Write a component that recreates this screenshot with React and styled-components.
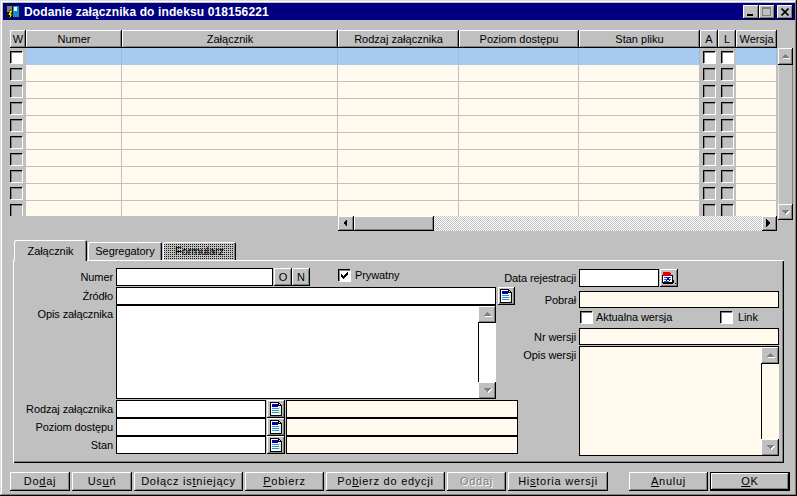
import React from 'react';
import styled, { createGlobalStyle, css } from 'styled-components';

const Global = createGlobalStyle`
  html, body { margin: 0; padding: 0; background: #c0c0c0; }
  body { font-family: "Liberation Sans", Arial, sans-serif; font-size: 11px; color: #000; }
`;

const raised = css`
  background: #c0c0c0;
  box-shadow: inset -1px -1px #000, inset 1px 1px #fff, inset -2px -2px #808080;
`;

const Window = styled.div`
  width: 797px; height: 496px; box-sizing: border-box; padding: 3px 2px 0 3px;
  background: #c0c0c0; overflow: hidden;
  box-shadow: inset -1px -1px #000, inset 1px 1px #dfdfdf, inset -2px -2px #808080, inset 2px 2px #fff;
  display: flex; flex-direction: column;
`;
const TitleBar = styled.div`
  height: 17px; flex: none; background: #000080; color: #fff; display: flex; align-items: center;
  padding: 0 2px;
`;
const TitleText = styled.div`
  font-weight: bold; font-size: 12px; letter-spacing: 0.12px; margin-left: 3px; flex: 1; white-space: nowrap;
`;
const WinBtn = styled.div`
  ${raised}; width: 16px; height: 14px; display: flex; align-items: center; justify-content: center;
  margin-left: ${p => p.$gap || 0}px;
`;
const Pane = styled.div`
  display: flex; margin: 10px 0 0 7px; align-items: flex-start; gap: 1px;
`;
const TableWrap = styled.div` width: 767px; flex: none; `;
const HeaderRow = styled.div` display: flex; height: 18px; `;
const HeadCell = styled.div`
  ${raised}; width: ${p => p.$w}px; flex: none; display: flex; align-items: center; justify-content: center;
  font-size: 11px; white-space: nowrap; overflow: hidden; padding-bottom: 1px; box-sizing: border-box;
`;
const Rows = styled.div` height: 168px; overflow: hidden; `;
const Row = styled.div` display: flex; height: 17px; `;
const Cell = styled.div`
  width: ${p => p.$w}px; flex: none; box-sizing: border-box; height: 17px;
  background: ${p => p.$sel ? '#a6caf0' : '#fff9ee'};
  border-bottom: 1px solid ${p => p.$sel ? '#a6caf0' : '#c0c0c0'};
  border-right: 1px solid ${p => p.$sel ? '#9cbcdc' : '#c0c0c0'};
`;
const CheckCell = styled.div`
  width: ${p => p.$w}px; flex: none; height: 17px; background: #c0c0c0; box-sizing: border-box; padding: 3px 0 0 ${p => p.$pl}px;
`;
const GridCheck = styled.div`
  width: 12px; height: 12px; box-sizing: border-box; background: ${p => p.$on ? '#fff' : '#c0c0c0'};
  box-shadow: inset 1px 1px #000, 1px 1px #fff, inset 2px 2px #808080;
`;
const HScroll = styled.div`
  margin-left: 328px; width: 439px; height: 15px; display: flex;
  background: repeating-conic-gradient(#fff 0 25%, #c0c0c0 0 50%) 0 0 / 2px 2px;
`;
const SBtn = styled.div`
  ${raised}; width: ${p => p.$w || 15}px; height: ${p => p.$h || 15}px; flex: none;
  display: flex; align-items: center; justify-content: center;
`;
const HThumb = styled.div` ${raised}; width: 80px; height: 15px; flex: none; `;
const HSpacer = styled.div` flex: 1; `;
const VScroll = styled.div`
  margin-top: 18px; width: 15px; height: 172px; flex: none; background: #c0c0c0; display: flex; flex-direction: column;
  box-shadow: inset -1px 0 #808080, inset 1px 0 #dfdfdf;
`;
const VTrack = styled.div` flex: 1; `;
const Tabs = styled.div`
  display: flex; align-items: flex-end; margin: 9px 0 0 11px; height: 20px; position: relative; z-index: 1;
`;
const Tab = styled.div`
  box-sizing: border-box; width: ${p => p.$w}px; height: ${p => p.$active ? 21 : 18}px;
  margin-bottom: ${p => p.$active ? -1 : 0}px; margin-right: 1px;
  display: flex; align-items: center; justify-content: center;
  background: #c0c0c0; border-top-left-radius: 2px; border-top-right-radius: 2px;
  box-shadow: inset 1px 1px #fff, inset -1px 0 #000, inset -2px 0 #808080;
  letter-spacing: -0.05px;
  ${p => p.$dither && css`
    background: conic-gradient(#1a1a1a 0 25%, #c0c0c0 0 100%) 0 0 / 2px 2px;
  `}
`;
const TabPanel = styled.div`
  margin-left: 10px; width: 771px; height: 203px; box-sizing: border-box; flex: none;
  background: #c0c0c0; padding: 8px 0 0 11px; display: flex;
  box-shadow: inset 1px 1px #fff, inset -1px -1px #000, inset -2px -2px #808080;
`;
const LeftCol = styled.div` width: 495px; flex: none; display: flex; flex-direction: column; `;
const RightCol = styled.div` width: 260px; flex: none; display: flex; flex-direction: column; `;
const FormRow = styled.div`
  display: flex; height: ${p => p.$h}px; align-items: flex-start; margin-top: ${p => p.$mt || 0}px;
`;
const Label = styled.div`
  flex: none; width: ${p => p.$w}px; height: 18px; display: flex; align-items: center; justify-content: flex-end;
  white-space: nowrap; margin-right: 3px; letter-spacing: -0.1px;
`;
const fieldCss = css`
  box-sizing: border-box; border: 1px solid #000; outline: none; padding: 0; display: block;
  margin: 0 0 0 ${p => p.$ml || 0}px;
  background: ${p => p.$ro ? '#fff9ee' : '#fff'}; border-radius: 0; font: inherit;
`;
const Field = styled.input`
  ${fieldCss}; width: ${p => p.$w}px; height: ${p => p.$h || 18}px; flex: none;
`;
const Memo = styled.div`
  ${fieldCss}; width: ${p => p.$w}px; height: ${p => p.$h}px; flex: none; display: flex; justify-content: flex-end;
`;
const MemoBar = styled.div`
  width: 18px; flex: none; display: flex; flex-direction: column; margin: 0 -1px -1px 0;
`;
const MemoTrack = styled.div` flex: 1; background: ${p => p.$bg}; box-shadow: inset 1px 0 #000; `;
const Side = styled.div`
  ${raised}; width: ${p => p.$w || 18}px; height: 18px; flex: none; display: flex; align-items: center; justify-content: center;
  margin-left: ${p => p.$ml || 0}px;
`;
const CheckBox = styled.div`
  width: 12px; height: 12px; flex: none; background: #fff; display: flex; align-items: center; justify-content: center;
  box-shadow: inset 1px 1px #000, inset 2px 2px #808080, 1px 1px #fff;
`;
const CheckLabel = styled.div` margin-left: ${p => p.$ml}px; letter-spacing: -0.1px; white-space: nowrap; `;
const CheckGroup = styled.div`
  display: flex; align-items: center; margin-left: ${p => p.$ml}px; margin-top: ${p => p.$mt || 0}px;
  width: ${p => p.$w ? p.$w + 'px' : 'auto'}; flex: none;
`;
const Footer = styled.div`
  display: flex; margin: 9px 0 0 7px; height: 19px; gap: 2px;
`;
const FootBtn = styled.div`
  ${p => p.$def ? css`
    background: #c0c0c0; box-shadow: inset 0 0 0 1px #000, inset -2px -2px #000, inset 2px 2px #fff, inset -3px -3px #808080;
  ` : raised};
  width: ${p => p.$w}px; flex: none; margin-left: ${p => p.$ml || 0}px; display: flex; align-items: center; justify-content: center;
  letter-spacing: 0.75px; white-space: nowrap; padding-bottom: 1px; box-sizing: border-box;
  ${p => p.$off && css` color: #808080; text-shadow: 1px 1px #fff; `}
`;

const colW = [16, 96, 216, 121, 120, 121, 18, 18, 41];
const heads = ['W', 'Numer', 'Załącznik', 'Rodzaj załącznika', 'Poziom dostępu', 'Stan pliku', 'A', 'L', 'Wersja'];

const Arrow = ({ d, muted }) => {
  const pts = { left: '5,0 5,8 1,4', right: '1,0 1,8 5,4', up: '0,6 8,6 4,2', down: '0,2 8,2 4,6' }[d];
  return (
    <svg width="9" height="9" viewBox="0 0 9 9" shapeRendering="crispEdges">
      {muted && <polygon points={pts} fill="#fff" transform="translate(1 1)" />}
      <polygon points={pts} fill={muted ? '#808080' : '#000'} />
    </svg>
  );
};

const BookIcon = () => (
  <svg width="13" height="15" viewBox="0 0 13 15" shapeRendering="crispEdges">
    <path d="M0.5 0.5h8l3 3v10h-11z" fill="#fff" stroke="#000" />
    <rect x="2" y="2" width="6" height="3" fill="#0000b0" />
    <path d="M2 6.5h7M2 8.5h7M2 10.5h7" stroke="#3090d0" />
    <path d="M8.5 0.5v3h3z" fill="#c8f0c0" stroke="#000" />
    <path d="M9 5h2v8H9z" fill="#d8f0d0" />
  </svg>
);
const CalIcon = () => (
  <svg width="14" height="13" viewBox="0 0 14 13" shapeRendering="crispEdges">
    <path d="M0.5 3.5h10v7h-10z" fill="#fff" stroke="#000" />
    <path d="M1 0h7v1h1v3H1z" fill="#e00000" />
    <path d="M2 5h7M2 7h7M2 9h5" stroke="#3060d0" />
    <path d="M4 5l4 4M8 5l-4 4" stroke="#000080" />
    <path d="M1 11h10v1H1zM11 8h1v3h-1zM13 11h1v1h-1z" fill="#000" />
  </svg>
);
const AppIcon = () => (
  <svg width="16" height="16" viewBox="0 0 16 16" shapeRendering="crispEdges">
    <rect x="1" y="1" width="14" height="13" fill="#101030" />
    <rect x="2" y="2" width="5" height="6" fill="#808080" />
    <rect x="8" y="2" width="6" height="11" fill="#1090d0" />
    <rect x="9" y="3" width="3" height="4" fill="#fff" />
    <path d="M5 6h3l-2 4h2l-4 5 1-4H3z" fill="#ffe000" stroke="#000" strokeWidth="0.5" />
  </svg>
);

const Check = () => (
  <svg width="9" height="9" viewBox="0 0 9 9" shapeRendering="crispEdges">
    <path d="M1 3h1v1h1v1h1V4h1V3h1V2h1V1h1v3H7v1H6v1H5v1H4v1H3V7H2V6H1z" fill="#000" />
  </svg>
);

const Scrollbar = ({ track }) => (
  <MemoBar>
    <SBtn $w={18} $h={17}><Arrow d="up" muted /></SBtn>
    <MemoTrack $bg={track} />
    <SBtn $w={18} $h={17}><Arrow d="down" muted /></SBtn>
  </MemoBar>
);

const LookupRow = ({ label }) => (
  <FormRow $h={18}>
    <Label $w={89}>{label}</Label>
    <Field $w={150} readOnly />
    <Side $ml={1}><BookIcon /></Side>
    <Field $w={232} $ml={1} $ro readOnly />
  </FormRow>
);

export default function App() {
  const rows = Array.from({ length: 10 }, (_, i) => i);
  return (
    <Window>
      <Global />
      <TitleBar>
        <AppIcon />
        <TitleText>Dodanie załącznika do indeksu 018156221</TitleText>
        <WinBtn><svg width="8" height="8" viewBox="0 0 8 8" shapeRendering="crispEdges"><rect x="0" y="6" width="6" height="2" fill="#000" /></svg></WinBtn>
        <WinBtn><svg width="10" height="9" viewBox="0 0 10 9" shapeRendering="crispEdges"><path d="M0.5 1.5h8v7h-8z" fill="none" stroke="#808080" /><path d="M0 0.5h9" stroke="#808080" /></svg></WinBtn>
        <WinBtn $gap={2}><svg width="8" height="8" viewBox="0 0 8 8"><path d="M0.5 0.5L7.5 7.5M7.5 0.5L0.5 7.5" stroke="#000" strokeWidth="1.6" /></svg></WinBtn>
      </TitleBar>
      <Pane>
        <TableWrap>
          <HeaderRow>
            {heads.map((h, i) => <HeadCell key={h} $w={colW[i]}>{h}</HeadCell>)}
          </HeaderRow>
          <Rows>
            {rows.map(r => (
              <Row key={r}>
                {colW.map((w, i) => (i === 0 || i === 6 || i === 7)
                  ? <CheckCell key={i} $w={w} $pl={i === 0 ? 0 : 3}><GridCheck $on={r === 0} /></CheckCell>
                  : <Cell key={i} $w={w} $sel={r === 0} />)}
              </Row>
            ))}
          </Rows>
          <HScroll>
            <SBtn $w={16}><Arrow d="left" /></SBtn>
            <HThumb />
            <HSpacer />
            <SBtn $w={15}><Arrow d="right" /></SBtn>
          </HScroll>
        </TableWrap>
        <VScroll>
          <SBtn $h={17}><Arrow d="up" muted /></SBtn>
          <VTrack />
          <SBtn $h={16}><Arrow d="down" muted /></SBtn>
        </VScroll>
      </Pane>
      <Tabs>
        <Tab $active $w={73}>Załącznik</Tab>
        <Tab $w={74}>Segregatory</Tab>
        <Tab $w={73} $dither>Formularz</Tab>
      </Tabs>
      <TabPanel>
        <LeftCol>
          <FormRow $h={19}>
            <Label $w={89}>Numer</Label>
            <Field $w={157} readOnly />
            <Side $ml={1}>O</Side>
            <Side>N</Side>
            <CheckGroup $ml={28} $mt={1}>
              <CheckBox><Check /></CheckBox>
              <CheckLabel $ml={5}>Prywatny</CheckLabel>
            </CheckGroup>
          </FormRow>
          <FormRow $h={18}>
            <Label $w={89}>Źródło</Label>
            <Field $w={380} readOnly />
            <Side $ml={2} $w={17}><BookIcon /></Side>
          </FormRow>
          <FormRow $h={95}>
            <Label $w={89}>Opis załącznika</Label>
            <Memo $w={380} $h={94}><Scrollbar track="#fff" /></Memo>
          </FormRow>
          <LookupRow label="Rodzaj załącznika" />
          <LookupRow label="Poziom dostępu" />
          <LookupRow label="Stan" />
        </LeftCol>
        <RightCol>
          <FormRow $h={18} $mt={1}>
            <Label $w={57}>Data rejestracji</Label>
            <Field $w={80} readOnly />
            <Side $ml={1}><CalIcon /></Side>
          </FormRow>
          <FormRow $h={17} $mt={4}>
            <Label $w={57}>Pobrał</Label>
            <Field $w={200} $h={17} $ro readOnly />
          </FormRow>
          <FormRow $h={14} $mt={3}>
            <CheckGroup $ml={61} $w={140}>
              <CheckBox />
              <CheckLabel $ml={4}>Aktualna wersja</CheckLabel>
            </CheckGroup>
            <CheckBox />
            <CheckLabel $ml={6}>Link</CheckLabel>
          </FormRow>
          <FormRow $h={17} $mt={3}>
            <Label $w={57}>Nr wersji</Label>
            <Field $w={200} $h={17} $ro readOnly />
          </FormRow>
          <FormRow $h={110} $mt={1}>
            <Label $w={57}>Opis wersji</Label>
            <Memo $w={200} $h={110} $ro><Scrollbar track="#fff9ee" /></Memo>
          </FormRow>
        </RightCol>
      </TabPanel>
      <Footer>
        <FootBtn $w={60}><span>Do<u>d</u>aj</span></FootBtn>
        <FootBtn $w={60}><span>Us<u>u</u>ń</span></FootBtn>
        <FootBtn $w={109}><span>Dołącz is<u>t</u>niejący</span></FootBtn>
        <FootBtn $w={79}><span><u>P</u>obierz</span></FootBtn>
        <FootBtn $w={119}><span>Po<u>b</u>ierz do edycji</span></FootBtn>
        <FootBtn $w={59} $off><span>Odda<u>j</u></span></FootBtn>
        <FootBtn $w={100}><span>Hi<u>s</u>toria wersji</span></FootBtn>
        <FootBtn $w={79} $ml={19}><span><u>A</u>nuluj</span></FootBtn>
        <FootBtn $w={80} $def><span><u>O</u>K</span></FootBtn>
      </Footer>
    </Window>
  );
}
